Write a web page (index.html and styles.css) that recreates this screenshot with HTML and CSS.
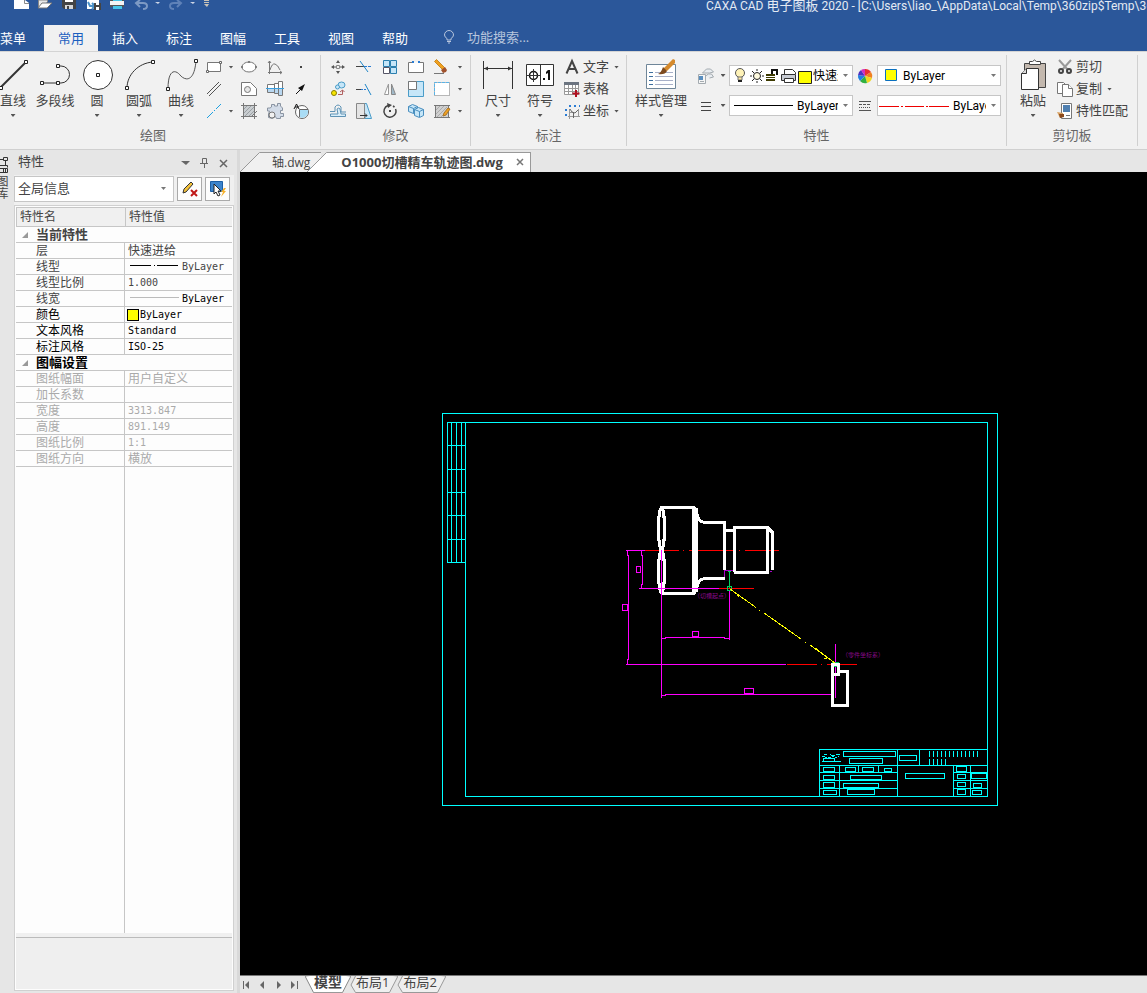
FILE: index.html
```html
<!DOCTYPE html>
<html lang="zh-CN">
  <head>
    <meta charset="utf-8">
    <title>CAXA CAD 电子图板 2020</title>
    <link rel="stylesheet" href="styles.css">
  </head>
  <body>
    <header class="top">
      <div class="titlebar">
        <svg class="quick" width="214" height="13" viewBox="0 0 214 13">
          <path fill="#fff" d="M14 0h11l4 3v6H14z"/>
          <path fill="none" stroke="#8a8a8a" d="M24.500 0v3.500H29"/>
          <path fill="#e8e8e8" stroke="#888" d="M38.500 7.500V0h9v2"/>
          <path fill="#fff" stroke="#777" d="M38 8l4-5h10l-5 5z"/>
          <path fill="#444" d="M62 0h14v9H64l-2-2z"/>
          <path fill="#fff" d="M65 0h8v2h-8z"/>
          <path fill="#d8d8d8" d="M65 5h8v4h-8z"/>
          <path fill="#444" d="M67 6h2v3h-2z"/>
          <path fill="#fff" d="M87 0h12v9H87z"/>
          <path fill="none" stroke="#4a90c8" stroke-width="2" d="M88 2l2 4h5M92 3l3 3-3 3"/>
          <path fill="#444" d="M94 3h7v7h-7z"/>
          <path fill="#fff" d="M96 3h3v2h-3zM96 7h3v3h-3z"/>
          <path fill="#555" d="M110 0h14v7h-14z"/>
          <path fill="#f4f4f4" d="M110 1h14v4h-14z"/>
          <path fill="#46c5e8" d="M113 0h9v1h-9zM113 6h9v3h-9z"/>
          <path fill="none" stroke="#7d9ac4" stroke-width="2" d="M137 3h6q4 0 4 3t-4 3M140 0l-4 3 4 4"/>
          <path fill="#cdd6e6" d="M155 2h5l-2 2z"/>
          <path fill="none" stroke="#5f82b8" stroke-width="2" d="M180 3h-6q-4 0-4 3t4 3M177 0l4 3-4 4"/>
          <path fill="#cdd6e6" d="M190 2h5l-2 2z"/>
          <path fill="#c9c3b8" d="M204 0h5v1h-5zM204 2h5v1h-5zM204 4h5l-2 3z"/>
        </svg>
        <div class="title">CAXA CAD <span class="cn">电子图板</span> 2020 - [C:\Users\liao_\AppData\Local\Temp\360zip$Temp\360</div>
      </div>
      <nav class="tabs">
        <button class="tab menu" type="button">菜单</button>
        <button class="tab active" type="button">常用</button>
        <button class="tab" type="button">插入</button>
        <button class="tab" type="button">标注</button>
        <button class="tab" type="button">图幅</button>
        <button class="tab" type="button">工具</button>
        <button class="tab" type="button">视图</button>
        <button class="tab" type="button">帮助</button>
        <label class="search">
          <svg width="12" height="14" viewBox="0 0 12 14" fill="none" stroke="#b8c6dd"><path d="M4 10V8.500Q1.500 7 1.500 5a4.500 4.500 0 0 1 9 0q0 2-2.500 3.500V10zM4 11.500h4M5 13h2"/></svg>
          <input type="text" placeholder="功能搜索..." aria-label="功能搜索">
        </label>
      </nav>
    </header>

    <section class="ribbon">
      <div class="group draw">
        <div class="tools">
          <button class="big" type="button">
            <svg width="42" height="34" viewBox="0 0 42 34"><path class="ln thick" d="M9 29L33 5"/><path class="sq" d="M7.500 28.500h3v3h-3zM32.500 2.500h3v3h-3z"/></svg>
            <span>直线</span><i class="arrow"></i>
          </button>
          <button class="big" type="button">
            <svg width="42" height="34" viewBox="0 0 42 34"><path class="ln" d="M24 8h3a8.500 8.500 0 0 1 0 17H8"/><path class="sq" d="M22.500 6.500h3v3h-3zM22.500 23.500h3v3h-3zM6.500 23.500h3v3h-3z"/></svg>
            <span>多段线</span>
          </button>
          <button class="big" type="button">
            <svg width="42" height="34" viewBox="0 0 42 34"><circle cx="22" cy="17" r="14.500" fill="#fff" stroke="#333"/><path class="sq" d="M20.500 15.500h3v3h-3z"/></svg>
            <span>圆</span><i class="arrow"></i>
          </button>
          <button class="big" type="button">
            <svg width="42" height="34" viewBox="0 0 42 34"><path class="ln" d="M9 30C9 17 20 5 35 4"/><path class="sq" d="M7.500 28.500h3v3h-3zM33.500 2.500h3v3h-3z"/></svg>
            <span>圆弧</span><i class="arrow"></i>
          </button>
          <button class="big" type="button">
            <svg width="42" height="34" viewBox="0 0 42 34"><path fill="none" stroke="#555" d="M8 31C8 10 16 12 20 17S34 26 36 3"/><path class="sq" d="M6.500 29.500h3v3h-3zM34.500 1.500h3v3h-3z"/></svg>
            <span>曲线</span><i class="arrow"></i>
          </button>
          <div class="icons draw-icons">
            <button type="button" aria-label="矩形"><svg viewBox="0 0 18 18"><path fill="#fff" stroke="#777" d="M2.500 4.500h13v9h-13z"/><path class="sq2" d="M14.500 3.500h2v2h-2zM1.500 12.500h2v2h-2z"/></svg></button>
            <i class="arrow"></i>
            <button type="button" aria-label="椭圆"><svg viewBox="0 0 18 18"><ellipse cx="9" cy="9" rx="7" ry="5" fill="#fff" stroke="#777"/><path class="sq2" d="M8.500 3.500h1v1h-1zM1.500 8.500h1v1h-1zM15.500 8.500h1v1h-1z"/></svg></button>
            <button type="button" aria-label="公式曲线"><svg viewBox="0 0 18 18" fill="none" stroke="#777"><path d="M3.500 3v13M2 14.500h14M2 5l1.500-2L5 5M14 13l2 1.500-2 1.500M4 12Q6 5 9 6t5 6"/></svg></button>
            <button type="button" aria-label="点"><svg viewBox="0 0 18 18"><path fill="#444" d="M8 8h2v2H8z"/></svg></button>

            <button type="button" aria-label="平行线"><svg viewBox="0 0 18 18" fill="none" stroke="#555"><path d="M2 14L14 2M4 16L16 4"/></svg></button>
            <i></i>
            <button type="button" aria-label="局部放大"><svg viewBox="0 0 18 18"><path fill="#fff" stroke="#777" d="M1.500 2.500h9l6 6v7h-15z"/><circle cx="7.500" cy="9.500" r="3" fill="#e6e6e6" stroke="#777"/></svg></button>
            <button type="button" aria-label="孔轴"><svg viewBox="0 0 18 18"><path fill="#fff" stroke="#777" d="M1.500 4.500h7v8h-7zM8.500 3.500h4v10h-4zM12.500 1.500h4v14h-4z"/><path fill="#b9d7f0" d="M2 9h6v3H2zM9 9h3v4H9zM13 9h3v6h-3z"/><path stroke="#3aa0e0" d="M0 8.500h18"/></svg></button>
            <button type="button" aria-label="箭头"><svg viewBox="0 0 18 18"><path stroke="#111" d="M4 14l6-6"/><path fill="#111" d="M13 4l-7 4 4 3z"/></svg></button>

            <button type="button" aria-label="中心线"><svg viewBox="0 0 18 18" fill="none" stroke="#1fa0e0"><path d="M2 16l6-6M9 9l1-1M11 7l5-5"/></svg></button>
            <i class="arrow"></i>
            <button type="button" aria-label="剖面线"><svg viewBox="0 0 18 18"><path fill="#c9cdd0" d="M3 3h12v8l-4 4H3z"/><path fill="none" stroke="#9aa0a4" d="M3 8l5-5M3 12l9-9M4 15L15 4M8 15l7-7"/><path fill="none" stroke="#777" d="M1 3.500h16M3.500 1v16M14.500 1v16M1 14.500h16M11 15l6-6"/></svg></button>
            <button type="button" aria-label="齿轮"><svg viewBox="0 0 18 18"><path fill="#d3dce8" stroke="#8a94a2" d="M5.500 5V2.500h3V4h3V1.500h3V4l2 2v2.500h-2v3h3v3h-3v2h-4l-1-2-3 2-4-1V12l1-3H1.500V6H4z"/><circle cx="6" cy="13" r="3" fill="#f1f1f1" stroke="#777"/></svg></button>
            <button type="button" aria-label="块"><svg viewBox="0 0 18 18"><circle cx="10" cy="10" r="6.500" fill="#fff" stroke="#666"/><path fill="#a9dcf5" d="M7 7h9q1 8-6 9-3-1-3-4z"/><path fill="none" stroke="#666" d="M7.500 15V7.500H16"/><path fill="none" stroke="#111" d="M2 7l2.500-5L7 7M3 5h3"/></svg></button>
          </div>
        </div>
        <div class="group-name">绘图</div>
      </div>

      <div class="group modify">
        <div class="tools">
          <div class="icons modify-icons">
            <button type="button" aria-label="平移"><svg viewBox="0 0 18 18"><path fill="#555" d="M9 2l2 3H7zM9 16l2-3H7zM2 9l3-2v4zM16 9l-3-2v4z"/><path stroke="#555" d="M4 9h3M11 9h3"/><path fill="#f1f1f1" stroke="#888" d="M7.500 7.500h3v3h-3z"/></svg></button>
            <button type="button" aria-label="裁剪"><svg viewBox="0 0 18 18" fill="none"><path stroke="#444" d="M1 8.500h8"/><path stroke="#2b7cd3" stroke-dasharray="3 1" d="M9 8.500h8"/><path stroke="#1f86c8" d="M5 3l8 11"/></svg></button>
            <button type="button" aria-label="阵列"><svg viewBox="0 0 18 18"><path fill="#c6e6f8" stroke="#2b7fae" d="M2.500 2.500h6v6h-6zM9.500 2.500h6v6h-6zM9.500 9.500h6v6h-6z"/><path fill="#fff" stroke="#556" d="M2.500 9.500h6v6h-6z"/></svg></button>
            <button type="button" aria-label="打断"><svg viewBox="0 0 18 18"><path fill="#fff" stroke="#777" d="M5 4.500H1.500v10h15v-10H13"/><path fill="#2b7cd3" d="M5 3h2v2H5zM11 3h2v2h-2z"/></svg></button>
            <button type="button" aria-label="删除"><svg viewBox="0 0 18 18"><path fill="#f0a020" stroke="#c98a20" d="M1.500 3.500l2-2 8 8-2 2z"/><path fill="#a0522d" d="M8 12l4-3 2 3-1 2-3 1z"/><path stroke="#777" d="M1 15.500h10"/></svg></button>
            <i class="arrow"></i>

            <button type="button" aria-label="平移复制"><svg viewBox="0 0 18 18"><circle cx="5" cy="13" r="2.500" fill="#f7e600" stroke="#8a7d00"/><ellipse cx="12.500" cy="5" rx="3.500" ry="3" fill="#c6e6f8" stroke="#4a9cc8"/><circle cx="8.500" cy="7" r="2" fill="#c6e6f8" stroke="#4a9cc8"/><path fill="none" stroke="#b06060" d="M9 14.500h4.500V10M11 12l2.500-2 2 2"/></svg></button>
            <button type="button" aria-label="延伸"><svg viewBox="0 0 18 18" fill="none"><path stroke="#444" d="M1 9.500h5"/><path stroke="#2b7cd3" stroke-dasharray="2 1" d="M6 9.500h5"/><path stroke="#1f86c8" d="M10 4l6 11"/></svg></button>
            <button type="button" aria-label="镜像"><svg viewBox="0 0 18 18"><path fill="#fff" stroke="#999" d="M7.500 4v10.500h-4z"/><path fill="#9fb8c8" stroke="#888" d="M10.500 4v10.500h4z"/></svg></button>
            <button type="button" aria-label="缩放"><svg viewBox="0 0 18 18"><path fill="#c6e6f8" stroke="#4a9cc8" d="M1.500 1.500h15v15h-15z"/><path fill="#fff" stroke="#777" d="M1.500 1.500h8v8h-8z"/></svg></button>
            <button type="button" aria-label="分解"><svg viewBox="0 0 18 18"><path fill="#fff" stroke="#777" stroke-dasharray="1 1" d="M1.500 2.500h15v13h-15z"/><path fill="none" stroke="#58b4e8" stroke-dasharray="3 1" d="M1.500 15V2.500H16"/></svg></button>
            <i class="arrow"></i>

            <button type="button" aria-label="等距线"><svg viewBox="0 0 18 18" fill="#d9eefa" stroke="#5f93b5"><path fill="none" d="M1 9.500h5V5q3-4 6 0v5h5"/><path d="M1.500 14.500h15V12H12l-1-5q-1-2-3 0l1 5H1.500z"/></svg></button>
            <button type="button" aria-label="拉伸"><svg viewBox="0 0 18 18"><path fill="#c6e6f8" stroke="#4a9cc8" d="M8.500 1.500h3l5 15h-8z"/><path fill="#e4e4e4" stroke="#888" d="M1.500 1.500h8v15h-8z"/><path fill="none" stroke="#333" d="M5 13.500h7M10 11.500l2 2-2 2"/></svg></button>
            <button type="button" aria-label="旋转"><svg viewBox="0 0 18 18"><path fill="none" stroke="#444" stroke-width="1.500" stroke-dasharray="28 2 2 2" d="M7 3.500A6 6 0 1 0 12 4"/><path fill="#444" d="M6 1l5 2-4 3zM8 8h2v2H8z"/></svg></button>
            <button type="button" aria-label="三维"><svg viewBox="0 0 18 18" fill="#c6e6f8" stroke="#4a8fbf"><path d="M1.500 4.500l4-2 5 2v5l-4 2-5-2zM1.500 4.500l5 2v5M6.500 6.500l4-2"/><path d="M7.500 7.500l4-2 5 2v6l-4 2-5-2zM12.500 15V9.500l4-2M12.500 9.500l-5-2"/></svg></button>
            <button type="button" aria-label="编辑填充"><svg viewBox="0 0 18 18"><path fill="#d0d0d0" stroke="#777" d="M2.500 3.500h13v12h-13z"/><path fill="none" stroke="#aaa" d="M3 8l4-4M3 12l8-8M4 15L14 5M8 15l7-7"/><path stroke="#777" d="M1 3.500h16M1 15.500h16"/><path fill="#f0a020" stroke="#a8762a" d="M11 11l4-5 2 1-4 6-3 1z"/></svg></button>
            <i class="arrow"></i>
          </div>
        </div>
        <div class="group-name">修改</div>
      </div>

      <div class="group mark">
        <div class="tools">
          <button class="big" type="button">
            <svg width="42" height="34" viewBox="0 0 42 34"><path class="ln" d="M6.500 3v28M35.500 3v28M7 10.500h28"/><path fill="#333" d="M7 10.500l4-2v4zM35 10.500l-4-2v4z"/></svg>
            <span>尺寸</span><i class="arrow"></i>
          </button>
          <button class="big" type="button">
            <svg width="42" height="34" viewBox="0 0 42 34"><path fill="#fff" stroke="#333" d="M7.500 6.500h27v21h-27zM21.500 6v21"/><circle cx="14.500" cy="17.500" r="4" fill="none" stroke="#111" stroke-width="1.500"/><path class="ln" d="M8 17.500h13M14.500 11v13"/><path fill="#111" d="M24 20h2v2h-2zM29 12h2v10h-2v-7l-2 1v-2z"/></svg>
            <span>符号</span><i class="arrow"></i>
          </button>
          <div class="list">
            <button type="button"><svg viewBox="0 0 18 18"><path fill="none" stroke="#444" stroke-width="2" d="M3.500 15.500L9 3l5.500 12.500M5 11h8"/></svg><span>文字</span><i class="arrow"></i></button>
            <button type="button"><svg viewBox="0 0 18 18"><path fill="#fff" stroke="#999" d="M1.500 2.500h14v12h-14zM1.500 8.500h14M1.500 11.500h14M5.500 5v9M9.500 5v9M12.500 5v9"/><path fill="#6b7480" d="M1 2h15v3H1z"/><path stroke="#b01020" stroke-width="2" d="M13 10v7M9.500 13.500h7"/></svg><span>表格</span></button>
            <button type="button"><svg viewBox="0 0 18 18" fill="none"><path stroke="#999" d="M6.500 7v10M5 14.500h12M15.500 7v8M6 10.500h5"/><path stroke="#666" d="M7 7l2 3 3 1 3-3M10.500 11v5"/><path stroke="#2b7cd3" stroke-dasharray="2 3" stroke-width="2" d="M3 7v10M6 4h11"/></svg><span>坐标</span><i class="arrow"></i></button>
          </div>
        </div>
        <div class="group-name">标注</div>
      </div>

      <div class="group props">
        <div class="tools">
          <button class="big wide" type="button">
            <svg width="42" height="34" viewBox="0 0 42 34"><path fill="#fff" stroke="#6f8699" d="M6.500 6.500h29v24h-29z"/><path stroke="#3d6f9e" d="M9 14.500h4M9 18.500h4M9 22.500h4M9 26.500h4"/><path stroke="#a8b0c8" d="M15 14.500h18M15 18.500h18M15 22.500h18M15 26.500h18"/><path fill="#d58a2c" d="M33 1l2 1v3l-8 8-4-2z"/><path fill="#7d4a1e" d="M23 9l4 4q-2 4-9 3 3-1 5-7z"/></svg>
            <span>样式管理</span><i class="arrow"></i>
          </button>
          <div class="prop-grid">
            <button type="button" aria-label="图层"><svg viewBox="0 0 18 18"><path fill="#e8ecf0" stroke="#a4abb0" d="M5.500 6l4-4h4l3 3-4 1zM8.500 9l3-2h3l2 3-4 1"/><path fill="#f6f6f6" stroke="#a4abb0" d="M1.500 7.500h7v9h-7z"/><path fill="#5a8fc0" d="M2 9h4v4H2z"/><path stroke="#a4abb0" d="M3 14.500h4"/></svg></button>
            <i class="arrow"></i>
            <div class="combo">
              <svg width="82" height="19" viewBox="0 0 82 19">
                <circle cx="10" cy="7" r="4.500" fill="#fff3b8" stroke="#555"/><path fill="#ffe9a0" stroke="#777" d="M8 11h4v3H8z"/><path fill="#222" d="M8 14h4v2H8z"/>
                <circle cx="27" cy="10" r="3.500" fill="#fffbe0" stroke="#222"/><path fill="none" stroke="#222" d="M27 3v2M27 15v2M20 10h2M32 10h2M22 5l2 2M30 13l2 2M32 5l-2 2M24 13l-2 2"/>
                <path fill="#3d3a00" d="M36 8h9v2h-9zM36 11h9v1h-9zM36 13h9v2h-9z"/><path fill="none" stroke="#111" stroke-width="2" d="M42 8V4h5v5"/>
                <path fill="#fff" stroke="#333" d="M54.500 8V3.500h8l3 3V8"/><path fill="#c8ccd4" stroke="#333" d="M51.500 8.500h14v6h-14z"/><path fill="#fff" stroke="#333" d="M54.500 12.500h9v4h-9z"/>
                <path fill="#ff0" stroke="#222" d="M68.500 5.500h13v12h-13z"/>
              </svg>
              <select aria-label="图层"><option>快速进给</option></select><i class="arrow"></i>
            </div>
            <button type="button" aria-label="颜色"><svg viewBox="0 0 18 18"><path fill="#e83030" d="M9 9V2a7 7 0 0 1 6 3z"/><path fill="#f08020" d="M9 9l6-4a7 7 0 0 1 1 6z"/><path fill="#f0d820" d="M9 9l7 2a7 7 0 0 1-5 5z"/><path fill="#30b040" d="M9 9l2 7a7 7 0 0 1-7-2z"/><path fill="#2080e0" d="M9 9l-5 5a7 7 0 0 1-2-6z"/><path fill="#5030c0" d="M9 9L2 8a7 7 0 0 1 3-5z"/><path fill="#d030c0" d="M9 9L5 3a7 7 0 0 1 4-1z"/></svg></button>
            <div class="combo">
              <svg width="24" height="19" viewBox="0 0 24 19"><path fill="#ff0" stroke="#0a6fc0" d="M7.500 3.500h11v11h-11z"/></svg>
              <select aria-label="颜色"><option>ByLayer</option></select><i class="arrow"></i>
            </div>

            <button type="button" aria-label="线宽"><svg viewBox="0 0 18 18"><path stroke="#444" d="M4 5.500h10M4 9.500h10M4 13.500h10"/></svg></button>
            <i class="arrow"></i>
            <div class="combo">
              <svg width="66" height="19" viewBox="0 0 66 19"><path stroke="#000" d="M4 9.500h59"/></svg>
              <select aria-label="线宽"><option>ByLayer</option></select><i class="arrow"></i>
            </div>
            <button type="button" aria-label="线型"><svg viewBox="0 0 18 18"><path stroke="#555" d="M3 4.500h12M3 13.500h12"/><path stroke="#555" stroke-dasharray="3 1" d="M3 7.500h12"/><path stroke="#555" stroke-dasharray="1 1" d="M3 10.500h12"/></svg></button>
            <div class="combo">
              <svg width="74" height="19" viewBox="0 0 74 19"><path stroke="#e00" d="M1 10.500h20M23 10.500h2M27 10.500h19M48 10.500h2M51 10.500h20"/></svg>
              <select aria-label="线型"><option>ByLayer</option></select><i class="arrow"></i>
            </div>
          </div>
        </div>
        <div class="group-name">特性</div>
      </div>

      <div class="group clip">
        <div class="tools">
          <button class="big" type="button">
            <svg width="42" height="34" viewBox="0 0 42 34"><path fill="#c3b8ae" stroke="#444" d="M12.500 5.500h21v24h-21z"/><path fill="#fff" stroke="#444" d="M17.500 6.500v-3h3q2-3 4 0h4v3z"/><path fill="#fff" stroke="#333" d="M14.500 10.500h12v21h-17v-16z"/><path fill="#ddd" stroke="#333" d="M9.500 15.500h5v-5"/></svg>
            <span>粘贴</span><i class="arrow"></i>
          </button>
          <div class="list">
            <button type="button"><svg viewBox="0 0 18 18" fill="none"><path stroke="#999" stroke-width="2" d="M3 2l9 10M15 2L6 12"/><circle cx="5" cy="13" r="2" stroke="#444" stroke-width="2"/><circle cx="13" cy="13" r="2" stroke="#444" stroke-width="2"/></svg><span>剪切</span></button>
            <button type="button"><svg viewBox="0 0 18 18" fill="#fff" stroke="#777"><path d="M1.500 2.500h6l3 3v8h-9z"/><path d="M6.500 4.500h6l4 4v8h-10z"/><path d="M12.500 4.500v4h4"/></svg><span>复制</span><i class="arrow"></i></button>
            <button type="button"><svg viewBox="0 0 18 18"><path fill="#fff" stroke="#777" d="M5.500 1.500h10v15h-10z"/><path fill="#4f7fb0" d="M7 3h7v7H7z"/><path stroke="#777" d="M10 13.500h4"/><path fill="#d8a060" d="M1 10l6 1v3l-3 2z"/><path fill="#8a4a1c" d="M3 12h5v3l-4 1z"/></svg><span>特性匹配</span></button>
          </div>
        </div>
        <div class="group-name">剪切板</div>
      </div>
    </section>

    <main class="work">
      <aside class="rail">
        <svg width="9" height="18" viewBox="0 0 9 18" fill="none" stroke="#333"><path d="M0 2.500h3M3.500.5h4v3h-4zM5.500 4v4M0 8.500h7.500v2M0 11.500h7.500v4H0M3.500 12v3M5.500 12v3"/></svg>
        <span>图库</span>
      </aside>

      <aside class="panel">
        <div class="panel-head">
          <h2>特性</h2>
          <svg width="49" height="12" viewBox="0 0 49 12"><path fill="#666" d="M0 4h9L5 8z"/><path fill="none" stroke="#666" d="M21.500 6V1.500h4V6M19 6.500h8M23.500 7v4"/><path stroke="#666" stroke-width="1.500" d="M39 3l7 7M46 3l-7 7"/></svg>
        </div>
        <div class="panel-tools">
          <div class="combo select-set"><select aria-label="选择集"><option>全局信息</option></select><i class="arrow"></i></div>
          <button type="button" aria-label="清除"><svg viewBox="0 0 18 18"><path fill="#f3c13a" stroke="#333" d="M2 13l1-4 7-7 2 2-7 8z"/><path stroke="#c01818" stroke-width="2" d="M10 10l6 6M16 10l-6 6"/></svg></button>
          <button type="button" aria-label="快速选择"><svg viewBox="0 0 18 18"><path fill="#3c84cc" stroke="#1c5fa6" d="M1.500 1.500h12v10h-12z"/><path fill="#fff" stroke="#222" d="M5 4v10l2-2 2 4 2-1-2-4h3z"/><path fill="#f5b02a" d="M15 8l-3 4h2l-2 5 5-6h-2l2-3z"/></svg></button>
        </div>
        <div class="sheet">
          <table class="props-table">
            <thead>
              <tr><th>特性名</th><th>特性值</th></tr>
            </thead>
            <tbody>
              <tr class="section"><td colspan="2">当前特性</td></tr>
              <tr><td>层</td><td class="word">快速进给</td></tr>
              <tr><td>线型</td><td><svg width="54" height="9" viewBox="0 0 54 9"><path stroke="#000" d="M2 4.500h21M26 4.500h1M29 4.500h21"/></svg>ByLayer</td></tr>
              <tr><td>线型比例</td><td>1.000</td></tr>
              <tr class="dark-value"><td>线宽</td><td><svg width="54" height="9" viewBox="0 0 54 9"><path stroke="#bbb" d="M2 4.500h49"/></svg>ByLayer</td></tr>
              <tr class="dark"><td>颜色</td><td><i class="swatch"></i>ByLayer</td></tr>
              <tr class="dark"><td>文本风格</td><td>Standard</td></tr>
              <tr class="dark"><td>标注风格</td><td>ISO-25</td></tr>
              <tr class="section dark"><td colspan="2">图幅设置</td></tr>
              <tr class="off"><td>图纸幅面</td><td class="word">用户自定义</td></tr>
              <tr class="off"><td>加长系数</td><td></td></tr>
              <tr class="off"><td>宽度</td><td>3313.847</td></tr>
              <tr class="off"><td>高度</td><td>891.149</td></tr>
              <tr class="off"><td>图纸比例</td><td>1:1</td></tr>
              <tr class="off"><td>图纸方向</td><td class="word">横放</td></tr>
            </tbody>
          </table>
          <div class="blank"></div>
          <div class="hint"></div>
        </div>
      </aside>

      <section class="editor">
        <div class="doc-tabs">
          <button class="doc" type="button"><svg width="20" height="20" viewBox="0 0 20 20"><path fill="#f0f0f0" d="M0 20L19 1h1v19z"/><path fill="none" stroke="#999" d="M0 20L19.500.5H20"/></svg><span>轴.dwg</span></button>
          <button class="doc current" type="button"><svg width="20" height="20" viewBox="0 0 20 20"><path fill="#fff" d="M0 20L19 1h1v19z"/><path fill="none" stroke="#999" d="M0 20L19.500.5H20"/></svg><span>O1000切槽精车轨迹图.dwg<svg width="8" height="8" viewBox="0 0 8 8"><path stroke="#777" stroke-width="1.500" d="M1 1l6 6M7 1L1 7"/></svg></span></button>
        </div>

        <svg class="canvas">
          <g transform="translate(-240 -172)" fill="none" shape-rendering="crispEdges">
            <!-- sheet frame -->
            <g stroke="#0ff">
              <path d="M442.500 413.500h555v392h-555zM447 422.500h540.500v374H465.500v-374"/>
              <path d="M447.500 422v141M451.500 422v141M456.500 422v141M461.500 422v141M447 445.500h18M447 469.500h18M447 492.500h18M447 515.500h18M447 539.500h18M447 562.500h18"/>
              <!-- title block -->
              <path d="M819.500 796V749.500H987M819 765.500h168M819 772.500h78M819 780.500h78M819 788.500h78M953 772.500h34M953 780.500h34M953 788.500h34"/>
              <path d="M839.500 765v31M858.500 765v7M878.500 765v7M897.500 749v47M919.500 749v16M953.500 765v31M970.500 765v31"/>
              <path d="M843.500 751.500h52v5h-52zM849.500 758.500h33v5h-33zM899.500 755.500h17v5h-17zM905.500 773.500h39v5h-39z"/>
              <path d="M823.500 767.500h11v4h-11zM845.500 767.500h10v4h-10zM862.500 767.500h11v4h-11zM884.500 768.500h7v3h-7zM823.500 775.500h11v4h-11zM823.500 782.500h11v5h-11zM823.500 790.500h13v4h-13z"/>
              <path d="M850.500 775.500h31v4h-31zM843.500 783.500h35v4h-35zM847.500 789.500h27v5h-27zM956.500 766.500h10v5h-10zM957.500 774.500h8v4h-8zM957.500 782.500h8v4h-8zM957.500 789.500h8v5h-8zM971.500 773.500h15v5h-15zM973.500 783.500h8v4h-8zM972.500 790.500h9v4h-9z"/>
              <path stroke-width="6" stroke-dasharray="1 3" d="M929 754h51M929 762h17"/>
              <path d="M822 756.500h3M824 754.500h3M828 757.500h3M831 755.500h4M830 754.500h1M835 757.500h2M836 754.500h4M838 756.500h1M825 757.500h2M832 756.500h2M823.500 761v-2.500h11V761M822 761.500h19"/>
            </g>
            <!-- centre lines -->
            <path stroke="#f00" d="M645 550.500h34M683 550.500h1M689 550.500h45M739 550.500h1M745 550.500h34M719 588.500h35M787 664.500h30M821 664.500h1M827 664.500h30"/>
            <path stroke="#a0c" d="M724.500 579v-8.500h10M770 571.500h2"/>
            <!-- shaft -->
            <g stroke="#fff" stroke-width="3">
              <ellipse cx="661.500" cy="528.500" rx="3" ry="21"/>
              <ellipse cx="661.500" cy="571.500" rx="3" ry="21"/>
              <path d="M661 507.500h33l3 6M661 593.500h33l3-7M697 514q1 8 8 8.500h19.500V570M697 587q1-8 8-8.500h20M725 530.500h9M734.500 572V527.500h33V572.500H734M768 528l4 4v38"/>
              <path stroke-width="6" d="M695 508v84"/>
            </g>
            <!-- dimensions -->
            <g stroke="#f0f">
              <path d="M626 550.500h19M627.500 551v4.500h1V659.500h-1v5M626 664.500h160M641.500 551v4.500h1v29h-1v4M639 588.500h80"/>
              <path d="M661.500 550v148M729.500 590v50M661 638.500h4.500v-1h59v1h4.500M661 695.500h4.500v-1H831M835.500 644v54"/>
              <path d="M692.500 631.500h6v5h-6zM744.500 688.500h9v5h-9zM636.500 566.500h4v6h-4zM622.500 604.500h5v6h-5z"/>
            </g>
            <path stroke="#00d060" d="M729.500 571v17M728 571.500h3M727.500 586.500h4v4h-4zM832.500 662.500h6v4h-6z"/>
            <!-- tool -->
            <path stroke="#fff" stroke-width="3" d="M838 671.500h9.500v34h-15v-41h6v10h-5"/>
            <!-- rapid move -->
            <path stroke="#ff0" d="M730 589l26 18.500M759 610.500h1M764 613l37 26M805 642.500h1M810 645l25 18M737 595.500h3M738.500 594v3M815 648l12 9M826.500 656v3M824 658.500h3"/>
            <text x="694" y="598">（切槽起点）</text>
            <text x="842" y="657">（零件坐标系）</text>
          </g>
        </svg>

        <div class="layouts">
          <svg class="pager" width="64" height="10" viewBox="0 0 64 10"><path fill="#666" d="M3 1h1v8H3zM9 1v8L5 5zM24 1v8l-4-4zM37 1v8l4-4zM51 1v8l4-4zM57 1h1v8h-1z"/></svg>
          <button class="layout current" type="button"><svg width="9" height="17" viewBox="0 0 9 17"><path fill="#fff" stroke="#888" d="M0 0l8.500 16.500H10V-1z"/></svg><span>模型</span><svg width="9" height="17" viewBox="0 0 9 17"><path fill="#fff" stroke="#888" d="M9 0L.5 16.500H-1V-1z"/></svg></button>
          <button class="layout" type="button"><svg width="9" height="17" viewBox="0 0 9 17"><path fill="#efefef" stroke="#999" d="M4 9l4.500 7.500H10V-1H9z"/></svg><span>布局1</span><svg width="9" height="17" viewBox="0 0 9 17"><path fill="#efefef" stroke="#999" d="M9 0L.5 16.500H-1V-1z"/></svg></button>
          <button class="layout" type="button"><svg width="9" height="17" viewBox="0 0 9 17"><path fill="#efefef" stroke="#999" d="M4 9l4.500 7.500H10V-1H9z"/></svg><span>布局2</span><svg width="9" height="17" viewBox="0 0 9 17"><path fill="#efefef" stroke="#999" d="M9 0L.5 16.500H-1V-1z"/></svg></button>
        </div>
      </section>
    </main>
  </body>
</html>
```

FILE: styles.css
```css
* {
  box-sizing: border-box;
}
html {
  height: 100%;
}
body {
  margin: 0;
  height: 100%;
  display: flex;
  flex-direction: column;
  overflow: hidden;
  background-color: #e6e6e6;
  color: #444;
  font-family: "Open Sans", "Noto Sans CJK SC", sans-serif;
  font-size: 13px;
}
button {
  display: flex;
  align-items: center;
  justify-content: center;
  padding: 0;
  border: 0;
  background: none;
  color: inherit;
  font: inherit;
  white-space: nowrap;
}
svg {
  display: block;
  flex: none;
}
.arrow {
  flex: none;
  width: 5px;
  height: 3px;
  background-color: #555;
  clip-path: polygon(0 0, 100% 0, 50% 100%);
}
.ln {
  fill: none;
  stroke: #333;
}
.thick {
  stroke-width: 2px;
}
.sq {
  fill: #fff;
  stroke: #222;
}
.sq2 {
  fill: #fff;
  stroke: #666;
}

/* title and menu */
.top {
  background-color: #2b579a;
  color: #fff;
}
.titlebar {
  display: flex;
  height: 25px;
}
.title {
  flex: 1;
  min-width: 0;
  margin-left: 492px;
  white-space: nowrap;
  line-height: 12px;
  font-size: 12px;
  font-family: Roboto, "Noto Sans CJK SC", sans-serif;
  color: #e4eaf3;
}
.cn {
  font-size: 13px;
}
.tabs {
  display: flex;
  height: 26px;
}
.tab {
  width: 54px;
  height: 26px;
  padding-bottom: 2px;
}
.menu {
  margin-left: -14px;
  margin-right: 4px;
}
.tab.active {
  background-color: #f1f1f1;
  color: #1a5fc0;
}
.search {
  display: flex;
  align-items: center;
  gap: 12px;
  margin-left: 21px;
  padding-bottom: 2px;
}
.search input {
  width: 120px;
  padding: 0;
  border: 0;
  background: none;
  color: #fff;
  font: inherit;
}
.search input::placeholder {
  color: #b8c6dd;
}

/* ribbon */
.ribbon {
  display: flex;
  flex: none;
  height: 99px;
  padding: 3px 0;
  border-top: 1px solid #d4d4d4;
  border-bottom: 1px solid #d0d0d0;
  background-color: #f1f1f1;
}
.group {
  flex: none;
  border-right: 1px solid #d0d0d0;
}
.tools {
  display: flex;
  height: 71px;
  padding-top: 1px;
}
.group-name {
  text-align: center;
  line-height: 19px;
  color: #666;
}
.draw {
  width: 335px;
  margin-left: -14px;
}
.draw .tools {
  padding-left: 6px;
}
.modify {
  width: 150px;
}
.modify .tools {
  padding-left: 4px;
}
.mark {
  width: 156px;
}
.mark .tools {
  padding-left: 6px;
}
.props {
  width: 380px;
}
.clip {
  width: 131px;
}
.clip .tools {
  padding-left: 5px;
}
.big {
  flex-direction: column;
  justify-content: flex-start;
  width: 42px;
  padding-top: 2px;
}
.big span {
  line-height: 16px;
}
.big .arrow {
  margin-top: 6px;
}
.wide {
  width: 68px;
}
.icons {
  display: grid;
  grid-auto-rows: 22px;
  align-items: center;
  justify-items: center;
}
.draw-icons {
  grid-template-columns: 24px 10px 26px 26px 26px;
}
.modify-icons {
  grid-template-columns: repeat(5, 26px) 10px;
}
.icons svg,
.list svg,
.prop-grid button svg,
.panel-tools button svg {
  width: 18px;
  height: 18px;
}
.list {
  display: flex;
  flex-direction: column;
}
.list button {
  height: 22px;
  justify-content: flex-start;
  padding-left: 2px;
}
.list svg {
  margin-right: 2px;
}
.list span {
  padding-bottom: 3px;
}
.list .arrow {
  margin-left: 5px;
}
.prop-grid {
  display: grid;
  grid-template-columns: 22px 12px 124px 24px 124px;
  grid-auto-rows: 21px;
  row-gap: 9px;
  align-items: center;
  justify-items: center;
  padding-top: 9px;
}
.combo {
  display: flex;
  align-items: center;
  width: 100%;
  height: 21px;
  padding-right: 4px;
  border: 1px solid #c6c6c6;
  background-color: #fff;
}
.combo select {
  flex: 1;
  min-width: 0;
  height: 19px;
  margin: 0;
  padding: 0 5px 0 1px;
  border: 0;
  background: none;
  appearance: none;
  color: #000;
  font-family: Roboto, "Noto Sans CJK SC", sans-serif;
  font-size: 12px;
}
.combo .arrow {
  background-color: #777;
}

/* work area */
.work {
  display: flex;
  flex: 1;
  min-height: 0;
}
.rail {
  width: 14px;
  padding-top: 7px;
}
.rail span {
  display: block;
  width: 12px;
  margin-left: -5px;
  writing-mode: vertical-rl;
  font-size: 12px;
  line-height: 12px;
}
.panel {
  display: flex;
  flex-direction: column;
  width: 220px;
  padding-bottom: 2px;
}
.panel-head {
  display: flex;
  align-items: center;
  justify-content: space-between;
  height: 25px;
  padding: 0 4px;
}
.panel-head h2 {
  margin: 0;
  padding-bottom: 4px;
  font-size: 13px;
  font-weight: normal;
  line-height: 18px;
}
.panel-tools {
  display: flex;
  align-items: center;
  gap: 3px;
  height: 30px;
  padding-bottom: 3px;
  background-color: #f0f0f0;
}
.panel-tools button {
  width: 25px;
  height: 24px;
  border: 1px solid #aaa;
  background-color: #fdfdfd;
}
.combo.select-set {
  width: 160px;
  height: 26px;
  padding-right: 7px;
}
.combo.select-set select {
  padding-left: 3px;
  font-size: 13px;
  color: #444;
}
.sheet {
  display: flex;
  flex-direction: column;
  flex: 1;
  padding: 1px;
  border: 1px solid #d0d0d0;
  background-color: #fdfdfd;
}
.props-table {
  width: 100%;
  table-layout: fixed;
  border-collapse: separate;
  border-spacing: 0;
  font-family: "DejaVu Sans Mono", "Noto Sans CJK SC", monospace;
  font-size: 10px;
}
.props-table th {
  height: 20px;
  padding: 0 3px;
  border: 1px solid #c6c6c6;
  border-right: 0;
  background-color: #f0f0f0;
  text-align: left;
  font-size: 12px;
  font-weight: normal;
  line-height: 18px;
}
.props-table th:first-child {
  width: 109px;
}
.props-table td {
  height: 16px;
  padding: 1px 0 0 3px;
  border-bottom: 1px solid #c6c6c6;
  line-height: 14px;
  white-space: nowrap;
  overflow: hidden;
}
.props-table td:first-child {
  padding-left: 20px;
  border-right: 1px solid #c6c6c6;
  font-size: 12px;
}
.props-table .word {
  font-size: 12px;
}
.props-table td svg {
  display: inline-block;
}
.props-table .section td {
  border-right: 0;
  font-weight: bold;
  font-size: 13px;
}
.section td::before {
  content: "";
  float: left;
  width: 6px;
  height: 6px;
  margin: 4px 0 0 -14px;
  background-color: #999;
  clip-path: polygon(100% 0, 100% 100%, 0 100%);
}
.dark,
.dark-value td:last-child {
  color: #000;
}
.off {
  color: #aaa;
}
.swatch {
  display: inline-block;
  width: 12px;
  height: 12px;
  margin: 0 1px 0 -1px;
  border: 1px solid #000;
  background-color: #ff0;
  vertical-align: middle;
}
.blank {
  flex: 1;
  width: 109px;
  border-right: 1px solid #c6c6c6;
}
.hint {
  height: 56px;
  border-top: 4px solid #f0f0f0;
  background-color: #efefef;
  box-shadow: inset 0 1px #bbb;
}

/* drawing */
.editor {
  display: flex;
  flex-direction: column;
  flex: 1;
  min-width: 0;
  margin-left: 3px;
  border-left: 3px solid #d9d9d9;
}
.doc-tabs {
  display: flex;
  height: 22px;
  padding-top: 2px;
}
.doc span {
  display: flex;
  align-items: center;
  height: 20px;
  padding: 0 11px 2px 12px;
  border-top: 1px solid #999;
  background-color: #f0f0f0;
  font-size: 12px;
}
.doc.current {
  margin-left: -14px;
}
.doc.current span {
  gap: 13px;
  padding: 0 6px 2px 14px;
  border-right: 1px solid #999;
  background-color: #fff;
  font-size: 13px;
  font-weight: bold;
}
.canvas {
  flex: 1;
  width: 100%;
  min-height: 0;
  background-color: #000;
}
.canvas text {
  fill: #8a0a8a;
  font-size: 6px;
}
.layouts {
  display: flex;
  height: 18px;
  border-top: 1px solid #777;
}
.pager {
  margin-top: 4px;
}
.layout {
  height: 17px;
  margin-right: -4px;
}
.layout span {
  height: 17px;
  line-height: 12px;
  border-bottom: 1px solid #999;
  background-color: #efefef;
}
.layout.current {
  position: relative;
  margin-left: 1px;
  font-weight: bold;
}
.layout.current span {
  background-color: #fff;
  font-size: 14px;
}
```
